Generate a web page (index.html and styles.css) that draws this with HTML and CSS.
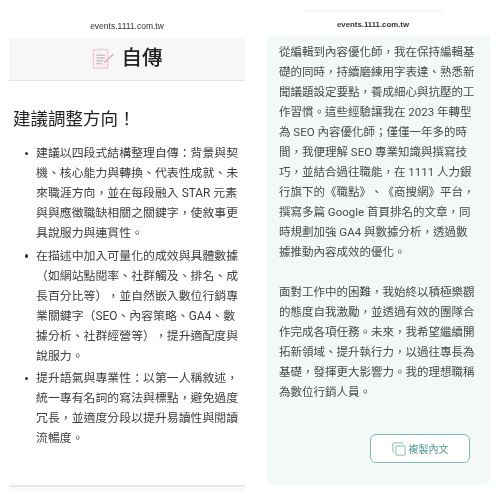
FILE: index.html
```html
<!DOCTYPE html>
<html lang="zh-Hant">
<head>
<meta charset="utf-8">
<title>自傳</title>
<link rel="stylesheet" href="styles.css">
</head>
<body>
<main class="page">
  <section class="col col-left">
    <div class="url url-left">events.1111.com.tw</div>
    <header class="title-bar">
      <svg class="title-icon" viewBox="0 0 24 24" width="23" height="23" fill="none">
        <rect x="1.5" y="3" width="15" height="19" fill="#fdf3f6" stroke="#f6c3d4" stroke-width="1.2"/>
        <rect x="6" y="1" width="6" height="3" fill="#e4e4e4"/>
        <path d="M4.5 8.5h9M4.5 11.5h9M4.5 14.5h7M4.5 17.5h6" stroke="#a8a8a8" stroke-width="1"/>
        <path d="M12.5 16.5 22.5 7.5" stroke="#ee8fb0" stroke-width="1.2"/>
      </svg>
      <h1 class="title">自傳</h1>
    </header>
    <div class="advice">
      <h2 class="advice-head">建議調整方向！</h2>
      <ul class="advice-list">
        <li>建議以四段式結構整理自傳：背景與契<br>機、核心能力與轉換、代表性成就、未<br>來職涯方向，並在每段融入 STAR 元素<br>與與應徵職缺相關之關鍵字，使敘事更<br>具說服力與連貫性。</li>
        <li>在描述中加入可量化的成效與具體數據<br>（如網站點閱率、社群觸及、排名、成<br>長百分比等），並自然嵌入數位行銷專<br>業關鍵字（SEO、內容策略、GA4、數<br>據分析、社群經營等），提升適配度與<br>說服力。</li>
        <li>提升語氣與專業性：以第一人稱敘述，<br>統一專有名詞的寫法與標點，避免過度<br>冗長，並適度分段以提升易讀性與閱讀<br>流暢度。</li>
      </ul>
    </div>
    <div class="foot-bar"></div>
  </section>
  <section class="col col-right">
    <div class="url-right-wrap">
      <div class="ghost"></div>
      <div class="url url-right">events.1111.com.tw</div>
    </div>
    <article class="letter">
      <p>從編輯到內容優化師，我在保持編輯基<br>礎的同時，持續磨練用字表達、熟悉新<br>聞議題設定要點，養成細心與抗壓的工<br>作習慣。這些經驗讓我在 2023 年轉型<br>為 SEO 內容優化師；僅僅一年多的時<br>間，我便理解 SEO 專業知識與撰寫技<br>巧，並結合過往職能，在 1111 人力銀<br>行旗下的《職點》、《商搜網》平台，<br>撰寫多篇 Google 首頁排名的文章，同<br>時規劃加強 GA4 與數據分析，透過數<br>據推動內容成效的優化。</p>
      <p>面對工作中的困難，我始終以積極樂觀<br>的態度自我激勵，並透過有效的團隊合<br>作完成各項任務。未來，我希望繼續開<br>拓新領域、提升執行力，以過往專長為<br>基礎，發揮更大影響力。我的理想職稱<br>為數位行銷人員。</p>
      <div class="actions">
        <button class="copy" type="button">
          <svg viewBox="0 0 16 16" width="14" height="14" fill="none" stroke="#6fb3ac" stroke-width="1">
            <rect x="4.5" y="4.5" width="10.5" height="10.5" rx="1"/>
            <path d="M2.5 12.5 A1.5 1.5 0 0 1 1 11V2.5A1.5 1.5 0 0 1 2.5 1H11a1.5 1.5 0 0 1 1.5 1.5"/>
          </svg>
          <span>複製內文</span>
        </button>
      </div>
    </article>
  </section>
</main>
</body>
</html>
```
FILE: styles.css
```css
* { box-sizing: border-box; }
html, body { margin: 0; padding: 0; background: #fff; }
body {
  width: 500px;
  height: 500px;
  overflow: hidden;
  font-family: Roboto, "Noto Sans CJK TC", "Noto Sans", sans-serif;
  color: #333;
  text-spacing-trim: space-all;
}
.page {
  display: grid;
  grid-template-columns: 236px 223px;
  column-gap: 22px;
  padding-left: 9px;
  height: 491px;
  filter: blur(0.4px);
}
.col { display: flex; flex-direction: column; min-width: 0; }
.url {
  font-family: "Liberation Sans", sans-serif;
  line-height: 12px;
  text-align: center;
  color: #333;
}
.url-left { padding-top: 20px; height: 38px; font-size: 8.5px; }
.url-right-wrap { height: 36px; padding: 9px 11px 0 0; display: flex; flex-direction: column; align-items: center; }
.ghost { width: 138px; height: 4px; background: #f9f9f9; }
.url-right { margin-top: 6px; font-size: 7.8px; font-weight: 700; }
.title-bar {
  height: 43px;
  padding-bottom: 2px;
  display: flex;
  align-items: center;
  justify-content: center;
  gap: 7px;
  background: #f7f7f7;
  border-bottom: 1px solid #e4e4e4;
}
.title-icon { flex: none; }
.title { margin: 0; font-size: 20.5px; line-height: 30px; font-weight: 500; color: #222; }
.advice { flex: 1; padding: 24px 4px 0; }
.advice-head { margin: 0; font-size: 17.5px; line-height: 28px; font-weight: 400; color: #222; }
.advice-list { list-style: none; margin: 10px 0 0; padding: 0 0 0 23px; font-size: 11.9px; line-height: 20px; color: #3d3d3d; }
.advice-list li { position: relative; margin-bottom: 2.5px; white-space: nowrap; }
.advice-list li::before {
  content: "";
  position: absolute;
  left: -11.5px;
  top: 8.5px;
  width: 3.6px;
  height: 3.6px;
  border-radius: 50%;
  background: #333;
}
.foot-bar { height: 6px; border-top: 2px solid #e8e8ee; background: #f8f8f8; }
.letter {
  height: 449px;
  padding: 6px 0 0 12px;
  background: #f3f9f9;
  border-radius: 0 0 6px 6px;
  font-size: 11.5px;
  line-height: 20px;
  color: #4a4a4a;
  display: flex;
  flex-direction: column;
}
.letter p { margin: 0 0 20px; white-space: nowrap; }
.actions { display: flex; justify-content: flex-end; padding-right: 20px; margin-top: auto; margin-bottom: 22px; }
.copy {
  width: 100px;
  height: 29px;
  display: flex;
  align-items: center;
  justify-content: center;
  gap: 3px;
  background: #fff;
  border: 1px solid #7dbcb5;
  border-radius: 6px;
  color: #4e9a92;
  font-family: inherit;
  font-size: 10px;
  padding: 0;
}
```
